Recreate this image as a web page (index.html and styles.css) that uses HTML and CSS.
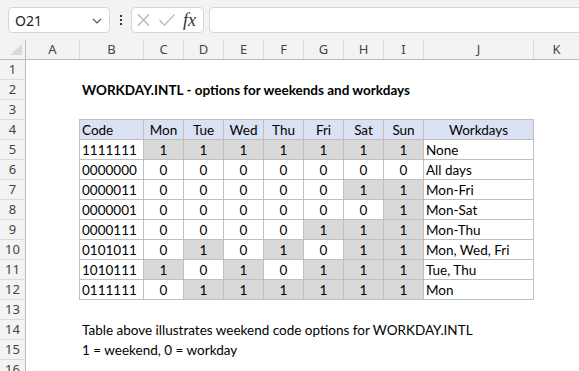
FILE: index.html
```html
<!DOCTYPE html>
<html lang="en">
<head>
    <meta charset="UTF-8">
    <title>WORKDAY.INTL weekend options</title>
    <link rel="stylesheet" href="styles.css">
</head>
<body>
    <div class="toolbar">
        <div class="name-box">
            <span>O21</span>
            <svg class="chevron" viewBox="0 0 10 6" width="10" height="6">
                <path d="M1 1L5 5L9 1" fill="none" stroke="#555" stroke-width="1.2"/>
            </svg>
        </div>
        <div class="more">
            <span></span><span></span><span></span>
        </div>
        <div class="fx-box">
            <svg viewBox="0 0 13 12" width="13" height="12">
                <path d="M1 0.5L12 11.5M12 0.5L1 11.5" stroke="#b4b4b4" stroke-width="1.1"/>
            </svg>
            <svg viewBox="0 0 16 12" width="16" height="12">
                <path d="M0.5 6L5.5 11.2L15.5 0.5" fill="none" stroke="#b4b4b4" stroke-width="1.1"/>
            </svg>
            <span class="fx">fx</span>
        </div>
        <div class="formula"></div>
    </div>

    <div class="col-head">
        <div class="corner">
            <svg viewBox="0 0 12 11" width="12" height="11">
                <path d="M12 0V11H0Z" fill="#d9d9d9"/>
            </svg>
        </div>
        <div class="ch col-a">A</div>
        <div class="ch col-b">B</div>
        <div class="ch">C</div>
        <div class="ch">D</div>
        <div class="ch">E</div>
        <div class="ch">F</div>
        <div class="ch">G</div>
        <div class="ch">H</div>
        <div class="ch">I</div>
        <div class="ch col-j">J</div>
        <div class="ch col-k">K</div>
    </div>

    <div class="sheet">
        <div class="row-head">
            <div class="rn">1</div>
            <div class="rn">2</div>
            <div class="rn">3</div>
            <div class="rn">4</div>
            <div class="rn">5</div>
            <div class="rn">6</div>
            <div class="rn">7</div>
            <div class="rn">8</div>
            <div class="rn">9</div>
            <div class="rn">10</div>
            <div class="rn">11</div>
            <div class="rn">12</div>
            <div class="rn">13</div>
            <div class="rn">14</div>
            <div class="rn">15</div>
            <div class="rn">16</div>
        </div>

        <div class="cells">
            <div class="title">WORKDAY.INTL - options for weekends and workdays</div>

            <div class="tbl">
                <div class="th left">Code</div>
                <div class="th">Mon</div>
                <div class="th">Tue</div>
                <div class="th">Wed</div>
                <div class="th">Thu</div>
                <div class="th">Fri</div>
                <div class="th">Sat</div>
                <div class="th">Sun</div>
                <div class="th">Workdays</div>

                <div class="td left">1111111</div>
                <div class="td w">1</div><div class="td w">1</div><div class="td w">1</div><div class="td w">1</div><div class="td w">1</div><div class="td w">1</div><div class="td w">1</div>
                <div class="td left">None</div>

                <div class="td left">0000000</div>
                <div class="td">0</div><div class="td">0</div><div class="td">0</div><div class="td">0</div><div class="td">0</div><div class="td">0</div><div class="td">0</div>
                <div class="td left">All days</div>

                <div class="td left">0000011</div>
                <div class="td">0</div><div class="td">0</div><div class="td">0</div><div class="td">0</div><div class="td">0</div><div class="td w">1</div><div class="td w">1</div>
                <div class="td left">Mon-Fri</div>

                <div class="td left">0000001</div>
                <div class="td">0</div><div class="td">0</div><div class="td">0</div><div class="td">0</div><div class="td">0</div><div class="td">0</div><div class="td w">1</div>
                <div class="td left">Mon-Sat</div>

                <div class="td left">0000111</div>
                <div class="td">0</div><div class="td">0</div><div class="td">0</div><div class="td">0</div><div class="td w">1</div><div class="td w">1</div><div class="td w">1</div>
                <div class="td left">Mon-Thu</div>

                <div class="td left">0101011</div>
                <div class="td">0</div><div class="td w">1</div><div class="td">0</div><div class="td w">1</div><div class="td">0</div><div class="td w">1</div><div class="td w">1</div>
                <div class="td left">Mon, Wed, Fri</div>

                <div class="td left">1010111</div>
                <div class="td w">1</div><div class="td">0</div><div class="td w">1</div><div class="td">0</div><div class="td w">1</div><div class="td w">1</div><div class="td w">1</div>
                <div class="td left">Tue, Thu</div>

                <div class="td left">0111111</div>
                <div class="td">0</div><div class="td w">1</div><div class="td w">1</div><div class="td w">1</div><div class="td w">1</div><div class="td w">1</div><div class="td w">1</div>
                <div class="td left">Mon</div>
            </div>

            <div class="note">Table above illustrates weekend code options for WORKDAY.INTL</div>
            <div class="note second">1 = weekend, 0 = workday</div>
        </div>
    </div>
</body>
</html>
```

FILE: styles.css
```css
:root {
    --chrome-bg: #f3f3f3;
    --chrome-line: #dadada;
    --chrome-edge: #bcbcbc;
    --chrome-text: #444444;
    --grid-line: #bfbfbf;
    --head-fill: #d9e1f2;
    --weekend-fill: #d9d9d9;
}

* {
    margin: 0;
    padding: 0;
    box-sizing: border-box;
}

body {
    width: 579px;
    height: 371px;
    overflow: hidden;
    background-color: #ffffff;
    font-family: 'Lato', 'Liberation Sans', sans-serif;
    color: #000000;
}

/* formula bar */
.toolbar {
    height: 40px;
    background-color: var(--chrome-bg);
    display: flex;
    align-items: flex-start;
    padding: 7px 0 0 8px;
    overflow: hidden;
}

.name-box,
.fx-box,
.formula {
    height: 26px;
    background-color: #ffffff;
    border: 1px solid #d6d6d6;
    border-radius: 4px;
}

.name-box {
    width: 102px;
    display: flex;
    align-items: center;
    justify-content: space-between;
    padding: 0 7px 0 6px;
    font-family: 'Noto Sans', sans-serif;
    font-size: 14px;
    color: #222222;
}

.chevron {
    margin-top: 1px;
}

.more {
    width: 21px;
    height: 26px;
    display: flex;
    flex-direction: column;
    align-items: center;
    justify-content: center;
    gap: 2px;
}

.more span {
    width: 2px;
    height: 2px;
    background-color: #333333;
}

.fx-box {
    width: 73px;
    display: flex;
    align-items: center;
    padding-left: 5px;
    gap: 9px;
}

.fx {
    font-family: 'Liberation Serif', serif;
    font-style: italic;
    font-size: 18px;
    color: #333333;
    margin-left: -1px;
    line-height: 1;
}

.formula {
    flex: 1;
    margin-left: 5px;
    margin-right: -10px;
}

/* column letters */
.col-head {
    display: flex;
    height: 20px;
    background-color: var(--chrome-bg);
    border-bottom: 1px solid var(--chrome-edge);
    font-family: 'Noto Sans', sans-serif;
    font-size: 13px;
    color: var(--chrome-text);
}

.corner {
    width: 26px;
    border-right: 1px solid var(--chrome-edge);
    display: flex;
    align-items: flex-end;
    justify-content: flex-end;
    padding: 0 3px 4px 0;
}

.ch {
    width: 40px;
    border-right: 1px solid var(--chrome-line);
    text-align: center;
    line-height: 19px;
}

.col-a { width: 54px; }
.col-b { width: 64px; }
.col-j { width: 110px; }
.col-k { flex: 1; border-right: none; }

/* sheet body */
.sheet {
    display: flex;
}

.row-head {
    width: 26px;
    flex-shrink: 0;
    background-color: var(--chrome-bg);
    border-right: 1px solid var(--chrome-edge);
    font-family: 'Noto Sans', sans-serif;
    font-size: 13px;
    color: var(--chrome-text);
}

.rn {
    height: 20px;
    border-bottom: 1px solid var(--chrome-line);
    text-align: center;
    line-height: 19px;
}

.cells {
    flex: 1;
    display: grid;
    grid-template-columns: 54px 64px repeat(7, 40px) 110px 1fr;
    grid-template-rows: repeat(16, 20px);
    font-size: 13.5px;
    line-height: 21px;
}

.title {
    grid-row: 2;
    grid-column: 2 / -1;
    padding-left: 2px;
    font-weight: 700;
    white-space: nowrap;
}

.tbl {
    grid-row: 4 / 13;
    grid-column: 2 / 11;
    margin: -1px 0 0 -1px;
    display: grid;
    grid-template-columns: 64px repeat(7, 40px) 110px;
    grid-auto-rows: 20px;
    border-top: 1px solid var(--grid-line);
    border-left: 1px solid var(--grid-line);
}

.th,
.td {
    border-right: 1px solid var(--grid-line);
    border-bottom: 1px solid var(--grid-line);
    text-align: center;
    white-space: nowrap;
}

.th {
    background-color: var(--head-fill);
}

.left {
    text-align: left;
    padding-left: 2px;
}

.w {
    background-color: var(--weekend-fill);
}

.note {
    grid-row: 14;
    grid-column: 2 / -1;
    padding-left: 2px;
    white-space: nowrap;
}

.note.second {
    grid-row: 15;
}
```
